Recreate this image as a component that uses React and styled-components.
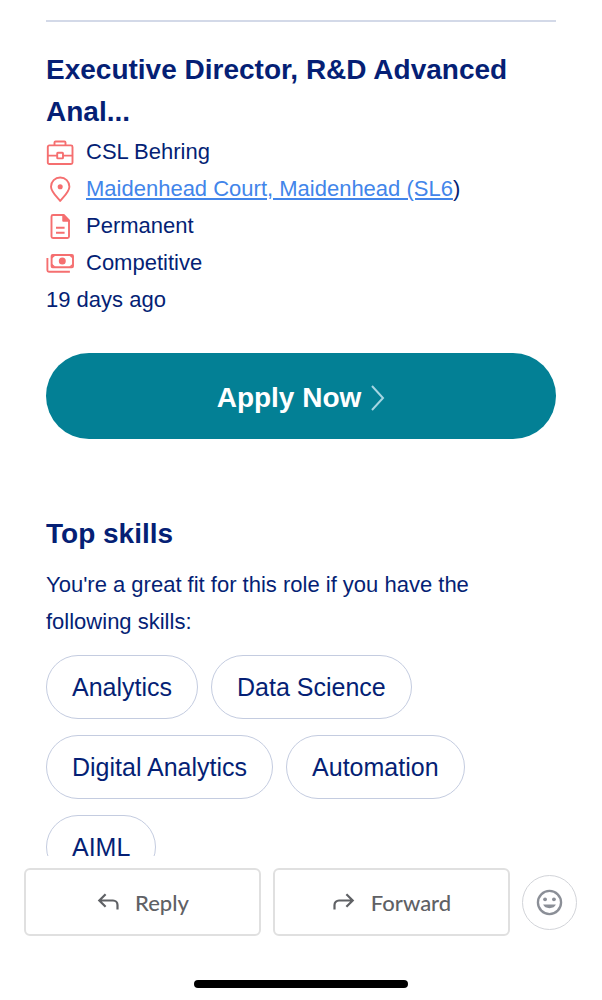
import React from "react";
import styled, { createGlobalStyle } from "styled-components";

const GlobalStyle = createGlobalStyle`
  * {
    box-sizing: border-box;
  }

  body {
    margin: 0;
    background-color: white;
    color: #051f75;
    font-family: "Liberation Sans", Arial, sans-serif;
  }
`;

const StyledScreen = styled.div`
  display: flex;
  flex-direction: column;
  height: 100vh;
`;

const StyledMessage = styled.main`
  flex: 1;
  min-height: 0;
  margin-bottom: 12px;
  padding: 20px 46px 0;
  overflow: hidden;
`;

const StyledDivider = styled.hr`
  height: 2px;
  margin: 0 0 27px;
  border: none;
  background-color: #d3d9e8;
`;

const StyledHeading = styled.h2`
  margin: 0 0 ${(props) => props.$spacing || "0"};
  font-size: 28px;
  font-weight: 700;
  line-height: 42px;
`;

const StyledDetails = styled.ul`
  margin: 0;
  padding: 0;
  list-style: none;
`;

const StyledDetail = styled.li`
  display: flex;
  align-items: center;
  gap: 12px;
  font-size: 22px;
  line-height: 37px;
`;

const StyledDetailIcon = styled.svg`
  flex: none;
  width: 28px;
  height: 28px;
  fill: none;
  stroke: #f56f70;
  stroke-width: 1.9;
  stroke-linejoin: round;
`;

const StyledLink = styled.a`
  color: #4285ea;
  text-decoration: underline;
`;

const StyledText = styled.p`
  margin: 0;
  font-size: 22px;
  line-height: 37px;
`;

const StyledApplyButton = styled.button`
  display: flex;
  align-items: center;
  justify-content: center;
  gap: 10px;
  width: 100%;
  height: 86px;
  margin: 35px 0 74px;
  padding: 3px 0 0;
  border: none;
  border-radius: 43px;
  background-color: #038095;
  color: white;
  font-family: inherit;
  font-size: 28px;
  font-weight: 700;
`;

const StyledSkills = styled.ul`
  display: flex;
  flex-wrap: wrap;
  gap: 16px 13px;
  margin: 15px 0 0;
  padding: 0;
  list-style: none;
`;

const StyledSkill = styled.li`
  padding: 0 25px;
  border: 1px solid #c4cce0;
  border-radius: 32px;
  font-size: 25px;
  line-height: 62px;
`;

const StyledActions = styled.footer`
  display: flex;
  align-items: center;
  gap: 12px;
  padding: 0 25px 0 24px;
`;

const StyledAction = styled.button`
  display: flex;
  flex: 1;
  align-items: center;
  justify-content: center;
  gap: 15px;
  height: 68px;
  border: 2px solid #e0e0e0;
  border-radius: 6px;
  background-color: white;
  color: #5f6165;
  font-family: Lato, sans-serif;
  font-size: 22px;
  font-weight: 500;
`;

const StyledReaction = styled.button`
  display: flex;
  align-items: center;
  justify-content: center;
  width: 55px;
  height: 55px;
  padding: 0;
  border: 1px solid #d2d4d9;
  border-radius: 50%;
  background-color: white;
`;

const StyledHomeBar = styled.div`
  width: 214px;
  height: 8px;
  margin: 44px auto 12px;
  border-radius: 4px;
  background-color: black;
`;

const skills = [
  "Analytics",
  "Data Science",
  "Digital Analytics",
  "Automation",
  "AIML",
];

function BriefcaseIcon() {
  return (
    <StyledDetailIcon viewBox="0 0 28 28" aria-hidden="true">
      <rect x="1.8" y="7.4" width="24.7" height="18.6" rx="1.5" />
      <path d="M8.5 7.4V4.5a1 1 0 0 1 1-1h9a1 1 0 0 1 1 1v2.900M1.8 17.6h9.4M17 17.6h9.5" />
      <rect x="11.2" y="14.8" width="5.8" height="5.6" rx="0.6" />
    </StyledDetailIcon>
  );
}

function PinIcon() {
  return (
    <StyledDetailIcon viewBox="0 0 28 28" aria-hidden="true">
      <path d="M14.2 26C11 22.1 5 16.6 5 11.7a9.2 9.2 0 0 1 18.4 0c0 4.9-6 10.4-9.2 14.3z" />
      <circle cx="14.2" cy="11.8" r="1.6" fill="#f56f70" />
    </StyledDetailIcon>
  );
}

function DocumentIcon() {
  return (
    <StyledDetailIcon viewBox="0 0 28 28" aria-hidden="true">
      <path d="M7 3h10.700l5.300 5.300v16.200a1.500 1.500 0 0 1-1.500 1.500H7a1.500 1.500 0 0 1-1.500-1.500V4.5a1.500 1.500 0 0 1 1.500-1.500z" />
      <path d="M17.2 3v5.8H23z" fill="#f56f70" />
      <path d="M10 15.8h8.600M10 20.8h8.600" />
    </StyledDetailIcon>
  );
}

function MoneyIcon() {
  return (
    <StyledDetailIcon viewBox="0 0 28 28" aria-hidden="true">
      <rect x="5.6" y="6" width="21.4" height="12.2" rx="1" />
      <path
        d="M6 6.500h3.500L6 9.500zM26.600 6.500v3L23.100 6.500zM6 17.700v-3l3.500 3zM26.600 17.700h-3.500l3.500-3z"
        fill="#f56f70"
        stroke="none"
      />
      <circle cx="16.3" cy="12.1" r="3.5" fill="#f56f70" stroke="none" />
      <path d="M1.400 9v12.200a1.500 1.500 0 0 0 1.500 1.500h21" />
    </StyledDetailIcon>
  );
}

function ReplyIcon() {
  return (
    <svg width="24" height="24" viewBox="0 0 24 24" fill="none" stroke="currentColor" strokeWidth="2.2" aria-hidden="true">
      <path d="M9.6 4.2 3.3 10.5l6.3 6.3M3.300 10.500H17a4.500 4.500 0 0 1 4.500 4.500v4.600" />
    </svg>
  );
}

function ForwardIcon() {
  return (
    <svg width="24" height="24" viewBox="0 0 24 24" fill="none" stroke="currentColor" strokeWidth="2.2" aria-hidden="true">
      <path d="m14.4 4.2 6.3 6.3-6.3 6.3M20.700 10.500H7A4.500 4.500 0 0 0 2.500 15v4.600" />
    </svg>
  );
}

function App() {
  return (
    <StyledScreen>
      <GlobalStyle />
      <StyledMessage>
        <StyledDivider />
        <StyledHeading>Executive Director, R&amp;D Advanced Anal...</StyledHeading>
        <StyledDetails>
          <StyledDetail>
            <BriefcaseIcon />
            CSL Behring
          </StyledDetail>
          <StyledDetail>
            <PinIcon />
            <span>
              <StyledLink href="#map">Maidenhead Court, Maidenhead (SL6</StyledLink>)
            </span>
          </StyledDetail>
          <StyledDetail>
            <DocumentIcon />
            Permanent
          </StyledDetail>
          <StyledDetail>
            <MoneyIcon />
            Competitive
          </StyledDetail>
        </StyledDetails>
        <StyledText>19 days ago</StyledText>
        <StyledApplyButton type="button">
          Apply Now
          <svg width="14" height="28" viewBox="0 0 14 28" fill="none" stroke="#a5d5e2" strokeWidth="2" aria-hidden="true">
            <path d="m1 2 11 12L1 26" />
          </svg>
        </StyledApplyButton>
        <StyledHeading $spacing="11px">Top skills</StyledHeading>
        <StyledText>
          You're a great fit for this role if you have the following skills:
        </StyledText>
        <StyledSkills>
          {skills.map((skill) => (
            <StyledSkill key={skill}>{skill}</StyledSkill>
          ))}
        </StyledSkills>
      </StyledMessage>
      <StyledActions>
        <StyledAction type="button">
          <ReplyIcon />
          Reply
        </StyledAction>
        <StyledAction type="button">
          <ForwardIcon />
          Forward
        </StyledAction>
        <StyledReaction type="button" aria-label="Add reaction">
          <svg width="27" height="27" viewBox="0 0 28 28" fill="#8b8f97" aria-hidden="true">
            <circle cx="14" cy="14" r="12" fill="none" stroke="#8b8f97" strokeWidth="2.4" />
            <circle cx="9.4" cy="10.7" r="2" />
            <circle cx="18.6" cy="10.7" r="2" />
            <path d="M7.400 16.200h13.200a6.900 5.200 0 0 1-13.200 0z" />
          </svg>
        </StyledReaction>
      </StyledActions>
      <StyledHomeBar />
    </StyledScreen>
  );
}

export default App;
